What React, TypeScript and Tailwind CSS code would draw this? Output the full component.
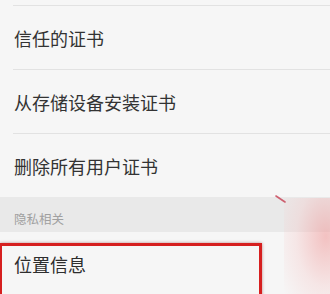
import React from "react";

const font = { fontFamily: '"Noto Sans CJK SC", "Noto Sans", sans-serif' };

function Row({ label }: { label: string }) {
  return (
    <div className="ml-[13px] h-[64px] shrink-0 border-t border-[#e2e2e2] flex items-center">
      <span className="pl-[1px] text-[18px] leading-none text-[#333]">{label}</span>
    </div>
  );
}

export default function App() {
  return (
    <div style={font} className="relative w-[330px] h-[294px] overflow-hidden bg-[#f6f6f6] flex flex-col">
      <div className="h-[5px] shrink-0" />
      <Row label="信任的证书" />
      <Row label="从存储设备安装证书" />
      <Row label="删除所有用户证书" />
      <div className="h-[35px] shrink-0 bg-[#e9e9e9] flex items-end pb-[7px]">
        <span className="pl-[14px] text-[12.5px] leading-none text-[#a0a0a0]">隐私相关</span>
      </div>
      <div className="h-[11px] shrink-0" />
      <div className="w-[262px] h-[60px] shrink-0 border-t-[3px] border-r-[3px] border-l-[2px] border-[#d61f1f] shadow-[0_0_3px_rgba(120,0,0,0.45)] pl-[12px] pt-[7px]">
        <span className="text-[18px] leading-none text-[#2e2e2e]">位置信息</span>
      </div>
      <div className="absolute left-[284px] top-[198px] w-[60px] h-[110px] bg-[radial-gradient(ellipse_at_70%_35%,rgba(240,150,150,0.55),rgba(245,200,200,0.35)_50%,rgba(246,246,246,0)_90%)]" />
      <svg className="absolute left-[272px] top-[192px]" width="16" height="14" viewBox="0 0 16 14">
        <path d="M4 4 L13 10" stroke="#c9485a" strokeWidth="1.6" strokeLinecap="round" opacity="0.85" />
      </svg>
    </div>
  );
}
